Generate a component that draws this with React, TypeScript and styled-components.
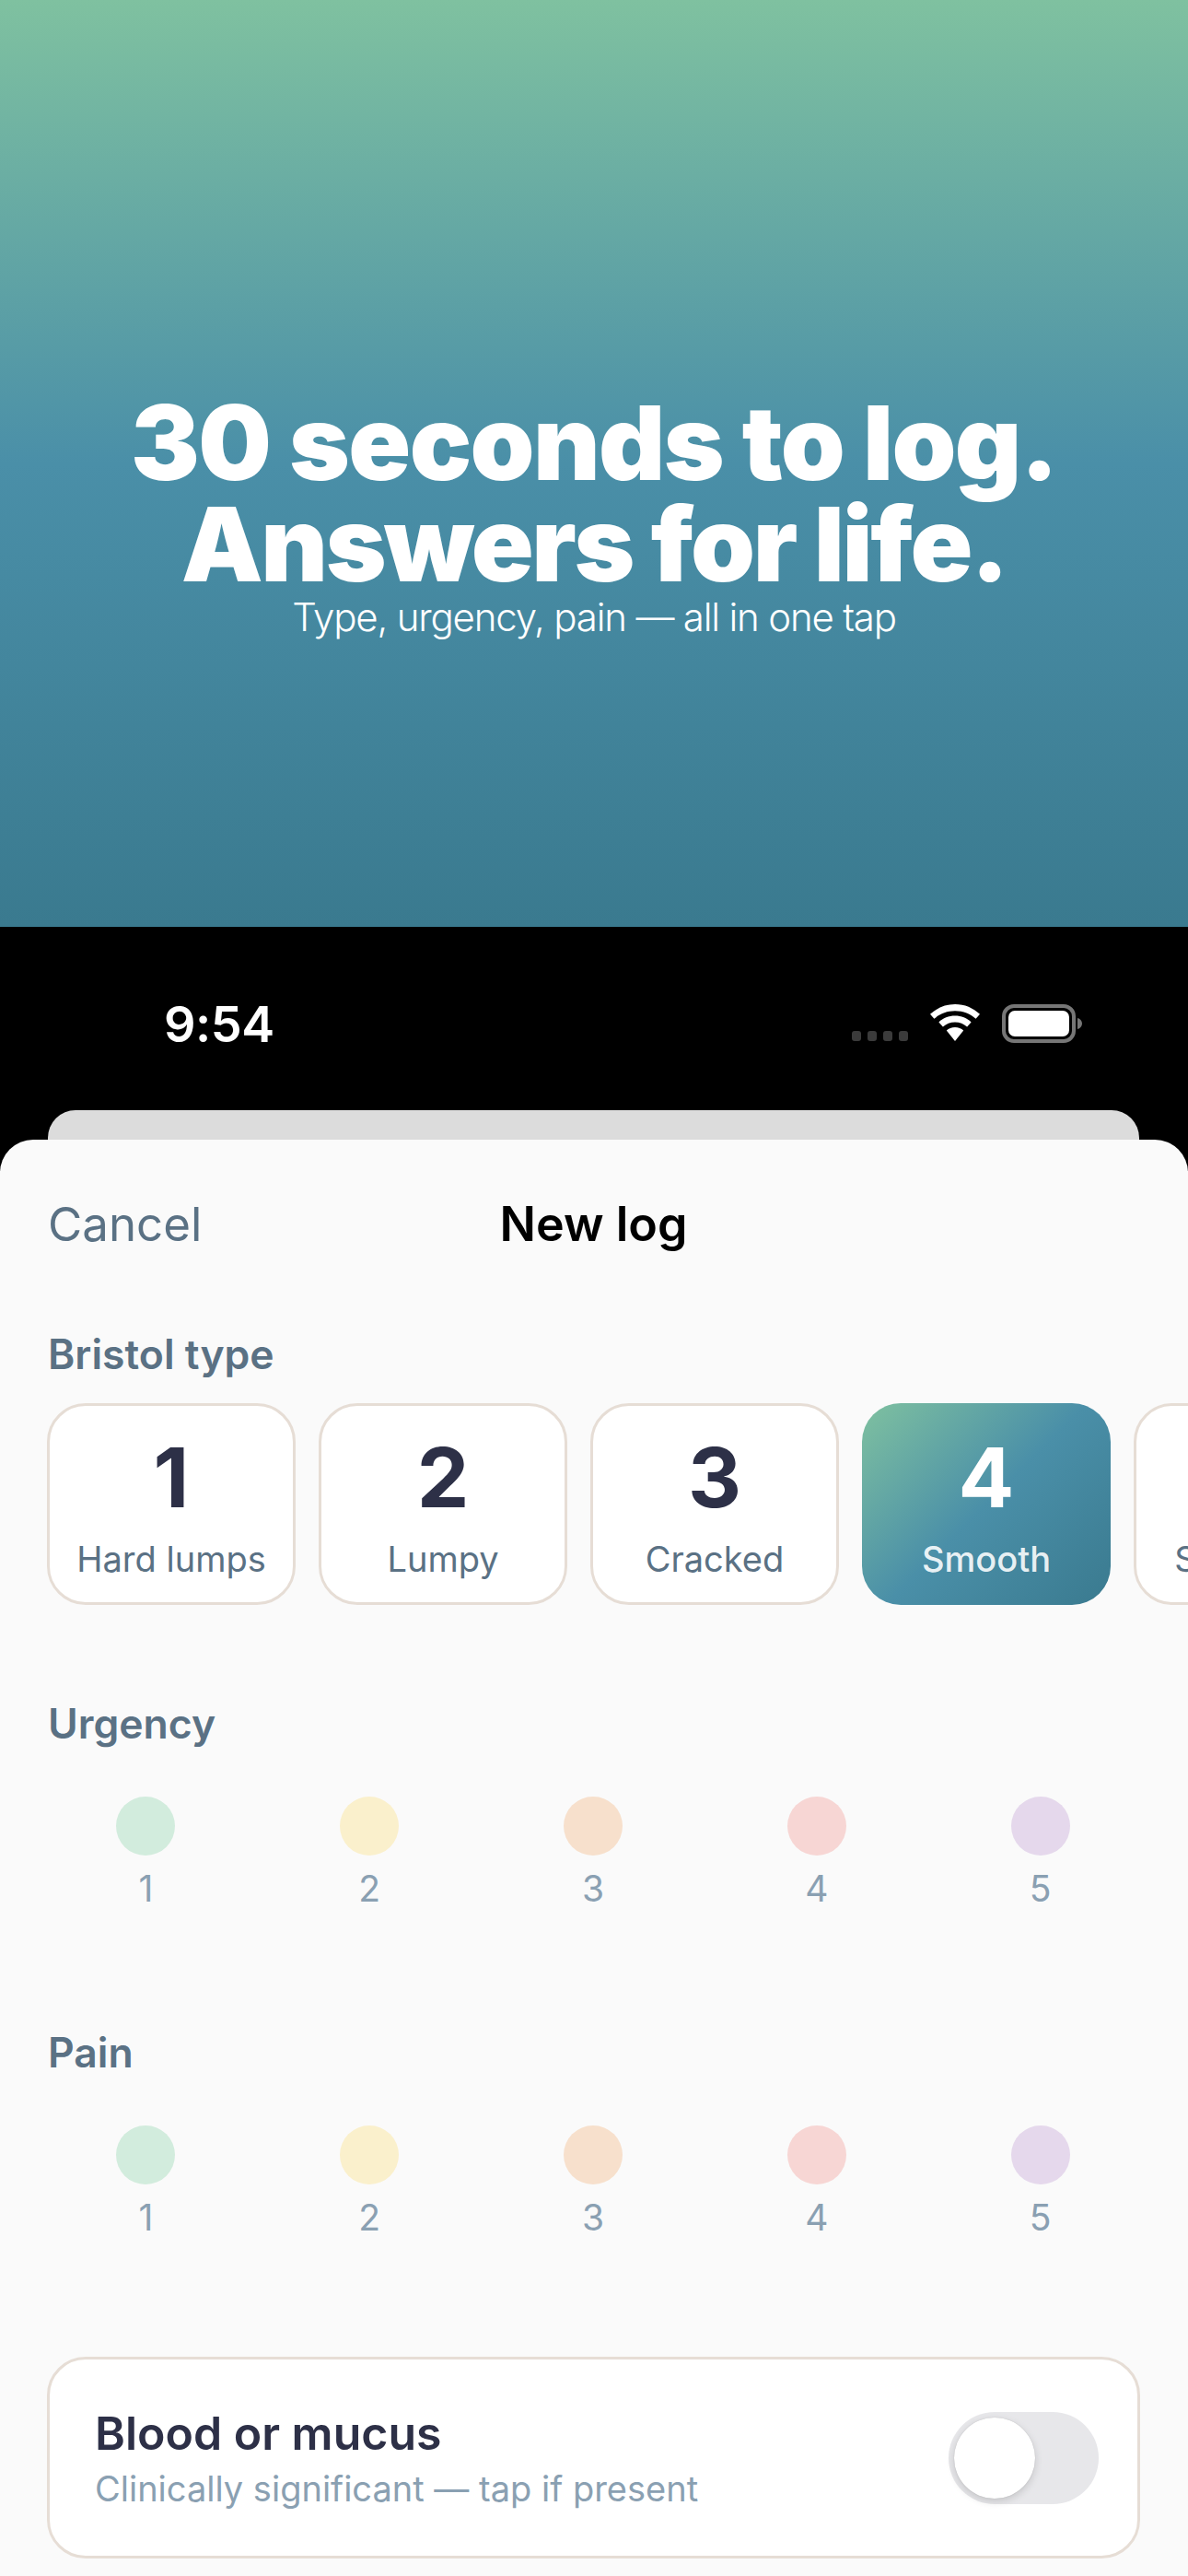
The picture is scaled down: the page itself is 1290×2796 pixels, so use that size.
import React from 'react';
import styled, { createGlobalStyle } from 'styled-components';

const Global = createGlobalStyle`
  html, body { margin: 0; padding: 0; background: #000; }
  body { font-family: Inter, "Liberation Sans", sans-serif; }
  * { box-sizing: border-box; }
`;

const Page = styled.div`
  width: 1290px;
  height: 2796px;
  overflow: hidden;
  display: flex;
  flex-direction: column;
  background: #000;
`;

const Hero = styled.header`
  height: 1006px;
  padding-top: 425px;
  background: linear-gradient(180deg, #7fc1a0 0%, #4a8fa8 50%, #3a7a8f 100%);
  color: #fff;
  text-align: center;
`;

const Headline = styled.h1`
  margin: 0;
  font-size: 112px;
  line-height: 110px;
  font-weight: 900;
`;

const HeadlineLine = styled.span<{ $spacing: number }>`
  display: block;
  letter-spacing: ${(p) => p.$spacing}px;
`;

const Tagline = styled.p`
  margin: 0;
  font-size: 42px;
  line-height: 50px;
  font-weight: 300;
  letter-spacing: -1.2px;
`;

const StatusBar = styled.div`
  height: 199px;
  padding: 71px 115px 0 178px;
  display: flex;
  justify-content: space-between;
  align-items: flex-start;
  color: #fff;
`;

const Time = styled.div`
  font-size: 54px;
  line-height: 70px;
  font-weight: 600;
  letter-spacing: -0.5px;
`;

const StatusIcons = styled.div`
  display: flex;
  align-items: flex-start;
  gap: 24px;
  padding-top: 13px;
`;

const SignalDots = styled.div`
  display: flex;
  gap: 7px;
  padding-top: 29px;
`;

const SignalDot = styled.span`
  width: 10px;
  height: 11px;
  border-radius: 3px;
  background: #3b3b3b;
`;

const BackCard = styled.div`
  height: 32px;
  margin: 0 53px 0 52px;
  background: #dcdcdc;
  border-radius: 30px 30px 0 0;
`;

const Sheet = styled.main`
  flex: 1;
  padding: 0 52px 0 51px;
  background: #fafafa;
  border-radius: 36px 36px 0 0;
`;

const SheetHeader = styled.div`
  height: 182px;
  position: relative;
  display: flex;
  align-items: center;
  justify-content: center;
`;

const CancelButton = styled.span`
  position: absolute;
  left: 1px;
  font-size: 51px;
  font-weight: 400;
  color: #5a7184;
`;

const SheetTitle = styled.span`
  font-size: 52px;
  font-weight: 600;
  color: #000;
`;

const SectionLabel = styled.div<{ $top: number }>`
  margin-top: ${(p) => p.$top}px;
  padding-left: 1px;
  font-size: 44.500px;
  line-height: 54px;
  font-weight: 600;
  color: #5a7184;
`;

const TypeRow = styled.div`
  display: flex;
  gap: 25px;
  margin-top: 26px;
  margin-right: -52px;
  overflow: hidden;
`;

const TypeTile = styled.div<{ $active?: boolean }>`
  flex: 0 0 270px;
  height: 219px;
  padding-top: ${(p) => (p.$active ? 31 : 28)}px;
  border-radius: 42px;
  display: flex;
  flex-direction: column;
  align-items: center;
  border: ${(p) => (p.$active ? 'none' : '3px solid #e6ddd5')};
  background: ${(p) =>
    p.$active ? 'linear-gradient(135deg, #7fc1a0 0%, #4a8fa8 50%, #3a7a8f 100%)' : '#fff'};
  color: ${(p) => (p.$active ? '#fff' : '#2d3047')};
`;

const TypeNumber = styled.div`
  font-size: 90px;
  line-height: 100px;
  font-weight: 700;
`;

const TypeName = styled.div<{ $active?: boolean }>`
  margin-top: 14px;
  font-size: 38px;
  line-height: 48px;
  white-space: nowrap;
  font-weight: ${(p) => (p.$active ? 500 : 400)};
  color: ${(p) => (p.$active ? 'rgba(255,255,255,0.9)' : '#5a7184')};
`;

const ScaleRow = styled.div`
  display: flex;
  justify-content: space-around;
  margin: 52px -13px 0 -14px;
`;

const ScaleItem = styled.div`
  display: flex;
  flex-direction: column;
  align-items: center;
  gap: 12px;
`;

const ScaleDot = styled.span<{ $color: string }>`
  width: 64px;
  height: 64px;
  border-radius: 50%;
  background: ${(p) => p.$color};
`;

const ScaleNumber = styled.span`
  font-size: 39px;
  line-height: 48px;
  color: #8aa0b2;
`;

const FlagCard = styled.div`
  margin-top: 127px;
  height: 219px;
  padding: 0 42px 0 49px;
  display: flex;
  align-items: center;
  justify-content: space-between;
  background: #fff;
  border: 3px solid #e6ddd5;
  border-radius: 42px;
`;

const FlagTitle = styled.div`
  font-size: 50px;
  line-height: 58px;
  font-weight: 600;
  color: #2d3047;
`;

const FlagHint = styled.div`
  margin-top: 8px;
  font-size: 38px;
  line-height: 46px;
  color: #8aa0b2;
`;

const Toggle = styled.div`
  position: relative;
  width: 163px;
  height: 100px;
  border-radius: 50px;
  background: #e7e7ea;
`;

const ToggleKnob = styled.span`
  position: absolute;
  left: 6px;
  top: 6px;
  width: 88px;
  height: 88px;
  border-radius: 50%;
  background: #fff;
  box-shadow: 0 3px 8px rgba(0, 0, 0, 0.15), 0 0 1px rgba(0, 0, 0, 0.2);
`;

const types = [
  { n: 1, name: 'Hard lumps' },
  { n: 2, name: 'Lumpy' },
  { n: 3, name: 'Cracked' },
  { n: 4, name: 'Smooth', active: true },
  { n: 5, name: 'Soft blobs' },
];

const dotColors = ['#d2ecdd', '#faf0cc', '#f7e0cc', '#f7d6d4', '#e5d8ec'];

function Scale() {
  return (
    <ScaleRow>
      {dotColors.map((c, i) => (
        <ScaleItem key={c}>
          <ScaleDot $color={c} />
          <ScaleNumber>{i + 1}</ScaleNumber>
        </ScaleItem>
      ))}
    </ScaleRow>
  );
}

function Wifi() {
  return (
    <svg width="54" height="40" viewBox="0 0 54 40">
      <path
        d="M27 0C16.500 0 7.300 4 0 10.800l4.400 5C10 10.500 18 7.200 27 7.200s17 3.300 22.600 8.600l4.400-5C46.700 4 37.500 0 27 0Z"
        fill="#fff"
      />
      <path
        d="M27 12.500c-6.900 0-13 2.600-17.600 6.900l4.500 5.100C17.300 21.300 22 19.400 27 19.400s9.700 1.900 13.100 5.100l4.500-5.100C40 15.100 33.900 12.500 27 12.500Z"
        fill="#fff"
      />
      <path d="M27 25c-3.700 0-6.900 1.300-9.200 3.500L27 40l9.200-11.500C33.900 26.300 30.700 25 27 25Z" fill="#fff" />
    </svg>
  );
}

function Battery() {
  return (
    <svg width="87" height="42" viewBox="0 0 87 42">
      <rect x="2" y="2" width="76" height="38" rx="11" fill="none" stroke="#767676" strokeWidth="4" />
      <rect x="7" y="7" width="66" height="28" rx="7" fill="#fff" />
      <path d="M82 15c3 .8 5 3 5 6s-2 5.200-5 6Z" fill="#767676" />
    </svg>
  );
}

export default function App() {
  return (
    <Page>
      <Global />
      <Hero>
        <Headline>
          <HeadlineLine $spacing={-1.6}>30 seconds to log.</HeadlineLine>
          <HeadlineLine $spacing={-2.4}>Answers for life.</HeadlineLine>
        </Headline>
        <Tagline>Type, urgency, pain — all in one tap</Tagline>
      </Hero>
      <StatusBar>
        <Time>9:54</Time>
        <StatusIcons>
          <SignalDots>
            <SignalDot />
            <SignalDot />
            <SignalDot />
            <SignalDot />
          </SignalDots>
          <Wifi />
          <Battery />
        </StatusIcons>
      </StatusBar>
      <BackCard />
      <Sheet>
        <SheetHeader>
          <CancelButton>Cancel</CancelButton>
          <SheetTitle>New log</SheetTitle>
        </SheetHeader>
        <SectionLabel $top={24}>Bristol type</SectionLabel>
        <TypeRow>
          {types.map((t) => (
            <TypeTile key={t.n} $active={t.active}>
              <TypeNumber>{t.n}</TypeNumber>
              <TypeName $active={t.active}>{t.name}</TypeName>
            </TypeTile>
          ))}
        </TypeRow>
        <SectionLabel $top={102}>Urgency</SectionLabel>
        <Scale />
        <SectionLabel $top={127}>Pain</SectionLabel>
        <Scale />
        <FlagCard>
          <div>
            <FlagTitle>Blood or mucus</FlagTitle>
            <FlagHint>Clinically significant — tap if present</FlagHint>
          </div>
          <Toggle>
            <ToggleKnob />
          </Toggle>
        </FlagCard>
      </Sheet>
    </Page>
  );
}
